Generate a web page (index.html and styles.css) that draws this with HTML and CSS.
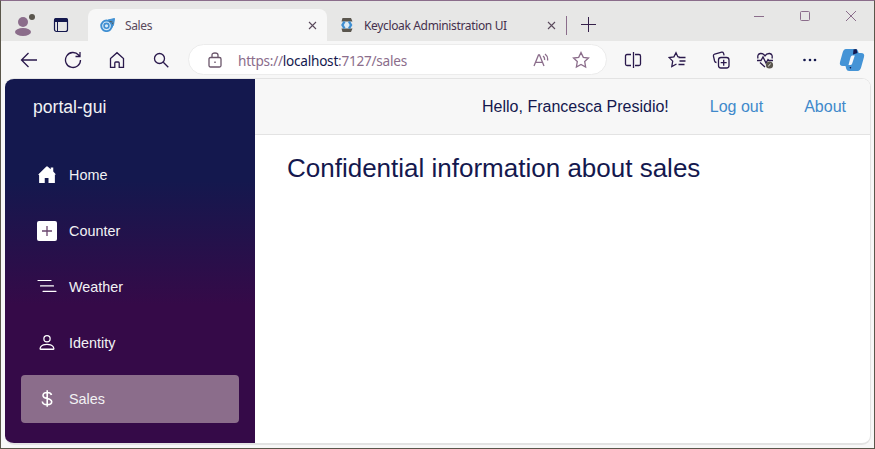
FILE: index.html
```
<!DOCTYPE html>
<html lang="en">
<head>
<meta charset="utf-8">
<title>Sales</title>
<link rel="stylesheet" href="styles.css">
</head>
<body>
<div class="window">
  <header class="tabstrip">
    <div class="profile">
      <svg width="22" height="24" viewBox="0 0 22 24"><g fill="#8b6d8b"><circle cx="9" cy="8" r="5"/><ellipse cx="9" cy="18" rx="8" ry="4"/></g><circle cx="18" cy="3" r="3" fill="#5a564e"/></svg>
    </div>
    <div class="workspace">
      <svg width="16" height="16" viewBox="0 0 16 16"><rect x="1.500" y="1.500" width="13" height="13" rx="2" fill="none" stroke="#14184e" stroke-width="1.200"/><path d="M1 4V3q0-2 2-2h10q2 0 2 2v2H1z" fill="#14184e"/><path d="M4.500 4v10" stroke="#14184e"/></svg>
    </div>
    <div class="tab active">
      <svg class="favicon" width="16" height="14" viewBox="0 0 16 14" fill="none" stroke="#3f8fd2"><path d="M8 2l6.500-1.500-1 6.500-2 3z" fill="#4694d6"/><circle cx="6.500" cy="7.800" r="5.300" fill="#d9eaf7" stroke-width="1.900"/><circle cx="6.500" cy="7.800" r="2.400" stroke-width="1.600"/><path d="M9.500 3.500l3 .5M12 6l1.500-1" stroke="#5a564e"/></svg>
      <span class="tab-title">Sales</span>
      <svg class="close" width="9" height="9" viewBox="0 0 9 9"><path d="M1 1l7 7M8 1L1 8"/></svg>
    </div>
    <div class="tab">
      <svg class="favicon key" width="14" height="14" viewBox="0 0 14 14"><path d="M2.500 1.500h9v11h-9z" fill="#dcebf5"/><path d="M2.500 0h8.500l1.500 3.500H1.500zM1.500 10.500h11L11 14H2.500z" fill="#5a564e"/><path d="M4.500 3.500L2.500 7l2 3.500M9 3.500L11 7l-2 3.500" fill="none" stroke="#3f8fd2" stroke-width="2.400"/></svg>
      <span class="tab-title">Keycloak Administration UI</span>
      <svg class="close" width="9" height="9" viewBox="0 0 9 9"><path d="M1 1l7 7M8 1L1 8"/></svg>
    </div>
    <span class="divider"></span>
    <svg class="newtab" width="15" height="15" viewBox="0 0 15 15"><path d="M7.500 0v15M0 7.500h15"/></svg>
    <div class="controls">
      <svg width="10" height="10" viewBox="0 0 10 10"><path d="M0 5.500h10"/></svg>
      <svg width="10" height="10" viewBox="0 0 10 10"><rect x=".5" y=".5" width="9" height="9" rx="1"/></svg>
      <svg width="10" height="10" viewBox="0 0 10 10"><path d="M0 0l10 10M10 0L0 10"/></svg>
    </div>
  </header>
  <div class="toolbar">
    <div class="cell"><svg width="18" height="18" viewBox="0 0 18 18"><path d="M17 9H1.500M8.500 2L1.500 9l7 7"/></svg></div>
    <div class="cell"><svg width="18" height="18" viewBox="0 0 18 18"><path d="M16.500 9A7.500 7.500 0 1 1 14.600 4L16 5.500M16 1v4.500h-4.500"/></svg></div>
    <div class="cell"><svg width="18" height="18" viewBox="0 0 18 18"><path d="M2.500 7.500L9 1.700l6.500 5.800v8.800h-4.300V12q0-1-1-1H7.800q-1 0-1 1v4.300H2.500z"/></svg></div>
    <div class="cell"><svg width="18" height="18" viewBox="0 0 18 18"><circle cx="7.500" cy="7.500" r="5"/><path d="M11.300 11.300l5 5"/></svg></div>
    <div class="address">
      <svg class="lock" width="14" height="16" viewBox="0 0 14 16"><rect x="1" y="5.500" width="12" height="9.500" rx="1.500"/><path d="M4 5.500V3q0-2 3-2t3 2v2.500"/><path d="M6.300 10.300h1.400" stroke-width="1.400"/></svg>
      <span class="url">https://<b>localhost</b>:7127/sales</span>
      <svg class="read" width="16" height="16" viewBox="0 0 16 16"><path d="M1 14L5.500 3h1L11 14M2.700 10.300h6.600M10 4q2 1.500 1.500 4M12 2q3.300 2.500 2.500 6.500"/></svg>
      <svg class="fav" width="18" height="18" viewBox="0 0 18 18"><path d="M9 1.500l2.300 4.800 5.200.7-3.800 3.600.9 5.400L9 13.400 4.400 16l.9-5.400L1.500 7l5.200-.7z"/></svg>
    </div>
    <div class="cell"><svg width="18" height="18" viewBox="0 0 18 18"><path d="M7 3.500H3q-1.500 0-1.500 1.500v8q0 1.500 1.500 1.500h4M11 3.500h4q1.500 0 1.500 1.500v8q0 1.500-1.500 1.500h-4M9.500 1v16"/></svg></div>
    <div class="cell"><svg width="18" height="18" viewBox="0 0 18 18"><path d="M11.500 6L9.800 5.700 8 1.700 5.900 5.900 1.200 6.600l3.500 3.500-.9 5.400L8.500 13M10.500 6.500H17.500M11.500 10h6M10.500 13.500h6"/></svg></div>
    <div class="cell"><svg width="18" height="18" viewBox="0 0 18 18"><path d="M4.500 11.500q-1.500 0-1.900-1.500L1.400 5Q1.200 3.500 2.700 3l7-1.800q1.300-.3 1.800 1l.6 2.200"/><rect x="6.500" y="6.500" width="10.500" height="10.500" rx="2.500"/><path d="M11.700 8.700v6M8.700 11.700h6"/></svg></div>
    <div class="cell"><svg class="heart" width="18" height="18" viewBox="0 0 18 18"><path d="M2 7.500Q1 3 4.500 2.500q3-.2 4.500 2.300 1.500-2.500 4.500-2.300Q17 3 16 7.500M1 9.500h4l2-3.500 3 6 2-3.500 1 1h4M4 11.500l5 4.500"/><circle cx="13.500" cy="14" r="3.600" fill="#5a564e" stroke="none"/><path d="M12.200 15.200l2.500-2.400" stroke="#f7f7f7" stroke-width="1"/></svg></div>
    <div class="cell"><svg width="18" height="18" viewBox="0 0 18 18"><g fill="#14184e" stroke="none"><circle cx="4.500" cy="9" r="1.300"/><circle cx="10" cy="9" r="1.300"/><circle cx="15" cy="9" r="1.300"/></g></svg></div>
    <div class="cell copilot"><svg width="26" height="24" viewBox="0 0 26 24"><g stroke="none"><path d="M7 1h9.500q2 0 2.500 2l.7 2H22q4 0 3 4l-2.500 9q-1 5-4 5H10q-2 0-2.700-2L6.500 18H4q-4 0-3-4l2.500-9Q4.500 1 7 1z" fill="#4594d6"/><path d="M13 7.500h2.800l-2.600 8q-.5 1.500-2 1.500H9.500l2-7.500q.4-1.500 1.500-2z" fill="#f7f9fc"/><path d="M14.500 1.500l3-.5 1 4-4.500 1.500zM10.500 19h1.800l-.7 2z" fill="#14184e"/></g></svg></div>
  </div>
  <div class="page">
    <nav class="sidebar">
      <div class="brand">portal-gui</div>
      <a class="link"><svg width="20" height="20" viewBox="0 0 16 16"><path d="M8.700 1.300a1 1 0 0 0-1.400 0L1 7.500l.7.700v6.200h4.500v-4h3v4h5.100V7.500l.4.200.3-.4L13 5.200V2h-2v1.400z"/></svg>Home</a>
      <a class="link"><svg width="20" height="20" viewBox="0 0 20 20"><rect width="20" height="20" rx="2"/><path d="M10 5v10M5 10h10" stroke="#6a456d" stroke-width="1.300"/></svg>Counter</a>
      <a class="link"><svg width="20" height="20" viewBox="0 0 20 20"><path d="M1 3.500h13M3.500 8.900h13M6 14.300h13" stroke="#fff" stroke-width="1.200" stroke-linecap="round"/></svg>Weather</a>
      <a class="link"><svg width="20" height="20" viewBox="0 0 16 16"><path d="M8 7.500a3 3 0 1 0 0-6 3 3 0 0 0 0 6m2-3a2 2 0 1 1-4 0 2 2 0 0 1 4 0m4 8c0 1-1 1-1 1H3s-1 0-1-1 1-4 6-4 6 3 6 4m-1-.004c-.001-.246-.154-.986-.832-1.664C11.516 10.180 10.289 9.500 8 9.500s-3.516.68-4.168 1.332c-.678.678-.83 1.418-.832 1.664z"/></svg>Identity</a>
      <a class="link current"><svg width="20" height="20" viewBox="0 0 20 20"><path d="M14.500 6Q14 3.500 10.200 3.500 6 3.500 6 6.500q0 2.200 4.200 3t4.500 3.200q0 3-4.500 3T5.300 12.500M10.200 1.200v16.600" fill="none" stroke="#fff" stroke-width="1.600"/></svg>Sales</a>
    </nav>
    <main class="content">
      <div class="topbar"><span>Hello, Francesca Presidio!</span><a>Log out</a><a>About</a></div>
      <h1>Confidential information about sales</h1>
    </main>
  </div>
</div>
</body>
</html>
```
FILE: styles.css
```
* { box-sizing: border-box; }
body { margin: 0; font-family: "Liberation Sans", Arial, sans-serif; color: #14184e; }
svg { display: block; flex: none; }
.window {
  width: 875px; height: 449px; overflow: hidden; background: #f7f7f7;
  border: 1px solid #5a564a; border-top-color: #8b6d8b;
  display: flex; flex-direction: column;
}
.tabstrip { height: 40px; flex: none; display: flex; background: #e7e7e6; font-family: "Noto Sans", sans-serif; }
.profile { width: 36px; padding: 13px 0 0 13px; }
.workspace { width: 50px; padding: 16px 0 0 16px; }
.tab { width: 239px; height: 40px; padding: 8px 10px 0 13px; display: flex; align-items: center; font-size: 12px; color: #5a4a5c; }
.tab.active { margin-left: 1px; height: 32px; padding: 0 10px 0 12px; margin-top: 8px; background: #f7f7f7; border-radius: 8px 8px 0 0; }
.tab-title { flex: 1; margin-left: 9px; white-space: nowrap; letter-spacing: -0.35px; }
.key + .tab-title { margin-left: 10px; color: #45304d; }
.close { stroke: #5a4a5c; stroke-width: 1.1; fill: none; }
.divider { width: 1px; height: 19px; margin-top: 15px; background: #8b6d8b; }
.newtab { margin: 16px 0 0 14px; stroke: #35204a; fill: none; }
.controls { margin-left: auto; padding: 10px 18px 0 0; display: flex; gap: 36px; stroke: #8b6d8b; fill: none; }
.toolbar { height: 37px; flex: none; display: flex; align-items: center; padding-left: 6px; stroke: #2a194c; stroke-width: 1.3; fill: none; }
.cell { width: 44px; flex: none; display: flex; justify-content: center; }
.cell.copilot { width: 42px; }
.address {
  width: 419px; height: 31px; margin: 0 4px 0 5px; padding: 0 16px 0 19px;
  display: flex; align-items: center; background: #fff; border-radius: 16px; border: 1px solid #ececec;
  stroke: #6b566b; flex: none;
}
.url { flex: 1; margin-left: 16px; padding-top: 1px; font: 13.6px "Noto Sans", sans-serif; color: #8b6d8b; letter-spacing: -0.25px; }
.url b { font-weight: 400; color: #14184e; }
.read { margin-right: 23px; stroke: #8b6d8b; }
.fav { stroke: #8b6d8b; }
.page {
  width: 866px; height: 367px; flex: none; margin-left: 4px; display: flex; overflow: hidden;
  border: solid #e3e3e3; border-width: 1px 1px 2px 0; border-radius: 9px; background: #fff;
}
.sidebar { width: 250px; flex: none; padding: 0 16px; background: linear-gradient(#14184e 28%, #350a48 62%); color: #f2f2f4; }
.brand { height: 56px; padding: 0 0 0 12px; line-height: 56px; font-size: 17.6px; margin-bottom: 16px; }
.link { height: 48px; margin-bottom: 8px; padding-left: 16px; display: flex; align-items: center; gap: 12px; border-radius: 4px; font-size: 14.4px; fill: #fff; }
.current { background: #8b6d8b; }
.content { flex: 1; }
.topbar { height: 56px; padding-right: 24px; display: flex; align-items: center; justify-content: flex-end; background: #f7f7f7; border-bottom: 1px solid #e3e3e3; font-size: 16px; }
.topbar a { color: #4089cb; margin-left: 41px; }
h1 { margin: 17px 0 0 32px; font-size: 26px; line-height: 32px; font-weight: 400; white-space: nowrap; }
```
